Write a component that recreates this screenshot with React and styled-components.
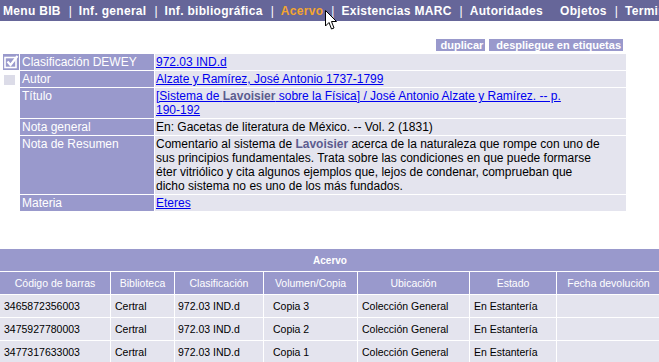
import React from "react";
import styled, { createGlobalStyle } from "styled-components";

const GlobalStyle = createGlobalStyle`
  body {
    margin: 0;
    background: #fff;
    font-family: "Liberation Sans", Arial, sans-serif;
  }
`;

const Page = styled.div`
  position: relative;
  width: 659px;
  height: 362px;
  overflow: hidden;
`;

const NavBar = styled.div`
  display: flex;
  align-items: center;
  height: 21px;
  padding-left: 3px;
  background: #666699;
  color: #fff;
  font-size: 12px;
  font-weight: bold;
  white-space: nowrap;
  letter-spacing: 0.3px;
  overflow: hidden;
`;

const NavItem = styled.span`
  color: ${(p) => (p.$active ? "#f4a530" : "#fff")};
  margin-right: ${(p) => (p.$gap ? "17px" : "0")};
`;

const Sep = styled.span`
  font-weight: normal;
  letter-spacing: 0;
  padding: 0 7px 0 8px;
`;

const Cursor = styled.svg`
  position: absolute;
  left: 325px;
  top: 10px;
`;

const Toolbar = styled.div`
  display: flex;
  justify-content: flex-end;
  gap: 4px;
  margin-top: 18px;
  padding-right: 36px;
`;

const ActionButton = styled.span`
  display: inline-block;
  height: 12px;
  line-height: 12px;
  padding: 0 2px 0 ${(p) => p.$pl || 5}px;
  background: #9999cc;
  color: #fff;
  font-size: 11px;
  font-weight: bold;
`;

const DetailTable = styled.table`
  border-collapse: separate;
  border-spacing: 1px;
  margin: 2px 0 0 2px;
  width: 625px;
  table-layout: fixed;
  font-size: 12px;
  line-height: 14px;

  td {
    vertical-align: top;
    padding: 1px 2px;
  }
`;

const CheckCell = styled.td`
  width: 15px;
  background: ${(p) => (p.$checked ? "#9999cc" : "#fff")};
  &&& {
    padding: 1px 0 0 1px;
  }
  svg {
    display: block;
  }
`;

const LabelCell = styled.td`
  width: 130px;
  background: #9999cc;
  color: #fff;
`;

const ValueCell = styled.td`
  background: #e4e4ee;
  color: #000;
  &&& {
    padding-left: 1px;
  }
`;

const Link = styled.a`
  color: #0000ee;
  text-decoration: underline;
`;

const Mark = styled.b`
  color: #5c5c8f;
`;

const EmptyBox = styled.div`
  width: 11px;
  height: 10px;
  margin-top: 3px;
  background: #dcdce8;
`;

const HoldingsTable = styled.table`
  border-collapse: separate;
  border-spacing: 1px;
  margin-top: 36px;
  margin-left: -1px;
  width: 661px;
  table-layout: fixed;
  font-size: 10px;

  td,
  th {
    height: 22px;
    padding: 0;
  }
`;

const Caption = styled.th`
  background: #9999cc;
  color: #fff;
  font-weight: bold;
  font-size: 10px;
  text-align: center;
`;

const HeadCell = styled.th`
  background: #9999cc;
  color: #fff;
  font-weight: normal;
  text-align: center;
  font-size: 10.5px;
`;

const DataCell = styled.td`
  background: #e4e4ee;
  color: #000;
  &&& {
    padding-left: ${(p) => p.$pl || 4}px;
  }
  font-size: 10.5px;
`;

const columns = [
  ["Código de barras", 110],
  ["Biblioteca", 63],
  ["Clasificación", 88],
  ["Volumen/Copia", 93],
  ["Ubicación", 111],
  ["Estado", 86],
  ["Fecha devolución", 103],
];

const copies = [
  ["3465872356003", "Copia 3"],
  ["3475927780003", "Copia 2"],
  ["3477317633003", "Copia 1"],
];

const CheckedIcon = () => (
  <svg width="15" height="14" viewBox="0 0 15 14">
    <rect x="1" y="2.5" width="11" height="10" fill="none" stroke="#fff" strokeWidth="1.6" />
    <path d="M3.5 6.5 L6.5 10 L13.5 1" fill="none" stroke="#fff" strokeWidth="2.2" />
  </svg>
);

export default function App() {
  return (
    <Page>
      <GlobalStyle />
      <NavBar>
        <NavItem>Menu BIB</NavItem>
        <Sep>|</Sep>
        <NavItem>Inf. general</NavItem>
        <Sep>|</Sep>
        <NavItem>Inf. bibliográfica</NavItem>
        <Sep>|</Sep>
        <NavItem $active>Acervo</NavItem>
        <Sep>|</Sep>
        <NavItem>Existencias MARC</NavItem>
        <Sep>|</Sep>
        <NavItem $gap>Autoridades</NavItem>
        <NavItem>Objetos</NavItem>
        <Sep>|</Sep>
        <NavItem>Terminar</NavItem>
      </NavBar>
      <Cursor width="13" height="21" viewBox="0 0 13 21">
        <path
          d="M0.5 0.5 L0.5 16 L4 12.5 L6.5 19 L9 18 L6.5 11.5 L11.5 11.5 Z"
          fill="#fff"
          stroke="#000"
          strokeWidth="1"
        />
      </Cursor>

      <Toolbar>
        <ActionButton>duplicar</ActionButton>
        <ActionButton $pl={7}>despliegue en etiquetas</ActionButton>
      </Toolbar>

      <DetailTable>
        <tbody>
          <tr>
            <CheckCell $checked>
              <CheckedIcon />
            </CheckCell>
            <LabelCell>Clasificación DEWEY</LabelCell>
            <ValueCell>
              <Link href="#">972.03 IND.d</Link>
            </ValueCell>
          </tr>
          <tr>
            <CheckCell>
              <EmptyBox />
            </CheckCell>
            <LabelCell>Autor</LabelCell>
            <ValueCell>
              <Link href="#">Alzate y Ramírez, José Antonio 1737-1799</Link>
            </ValueCell>
          </tr>
          <tr>
            <CheckCell />
            <LabelCell>Título</LabelCell>
            <ValueCell>
              <Link href="#">
                [Sistema de <Mark>Lavoisier</Mark> sobre la Física] / José Antonio Alzate y Ramírez. -- p.
                <br />
                190-192
              </Link>
            </ValueCell>
          </tr>
          <tr>
            <CheckCell />
            <LabelCell>Nota general</LabelCell>
            <ValueCell>En: Gacetas de literatura de México. -- Vol. 2 (1831)</ValueCell>
          </tr>
          <tr>
            <CheckCell />
            <LabelCell>Nota de Resumen</LabelCell>
            <ValueCell>
              Comentario al sistema de <Mark>Lavoisier</Mark> acerca de la naturaleza que rompe con uno de
              <br />
              sus principios fundamentales. Trata sobre las condiciones en que puede formarse
              <br />
              éter vitriólico y cita algunos ejemplos que, lejos de condenar, comprueban que
              <br />
              dicho sistema no es uno de los más fundados.
            </ValueCell>
          </tr>
          <tr>
            <CheckCell />
            <LabelCell>Materia</LabelCell>
            <ValueCell>
              <Link href="#">Eteres</Link>
            </ValueCell>
          </tr>
        </tbody>
      </DetailTable>

      <HoldingsTable>
        <colgroup>
          {columns.map(([name, w]) => (
            <col key={name} style={{ width: w }} />
          ))}
        </colgroup>
        <thead>
          <tr>
            <Caption colSpan={7}>Acervo</Caption>
          </tr>
          <tr>
            {columns.map(([name]) => (
              <HeadCell key={name}>{name}</HeadCell>
            ))}
          </tr>
        </thead>
        <tbody>
          {copies.map(([code, copy]) => (
            <tr key={code}>
              <DataCell>{code}</DataCell>
              <DataCell>Certral</DataCell>
              <DataCell $pl={3}>972.03 IND.d</DataCell>
              <DataCell $pl={9}>{copy}</DataCell>
              <DataCell>Colección General</DataCell>
              <DataCell>En Estantería</DataCell>
              <DataCell />
            </tr>
          ))}
        </tbody>
      </HoldingsTable>
    </Page>
  );
}
